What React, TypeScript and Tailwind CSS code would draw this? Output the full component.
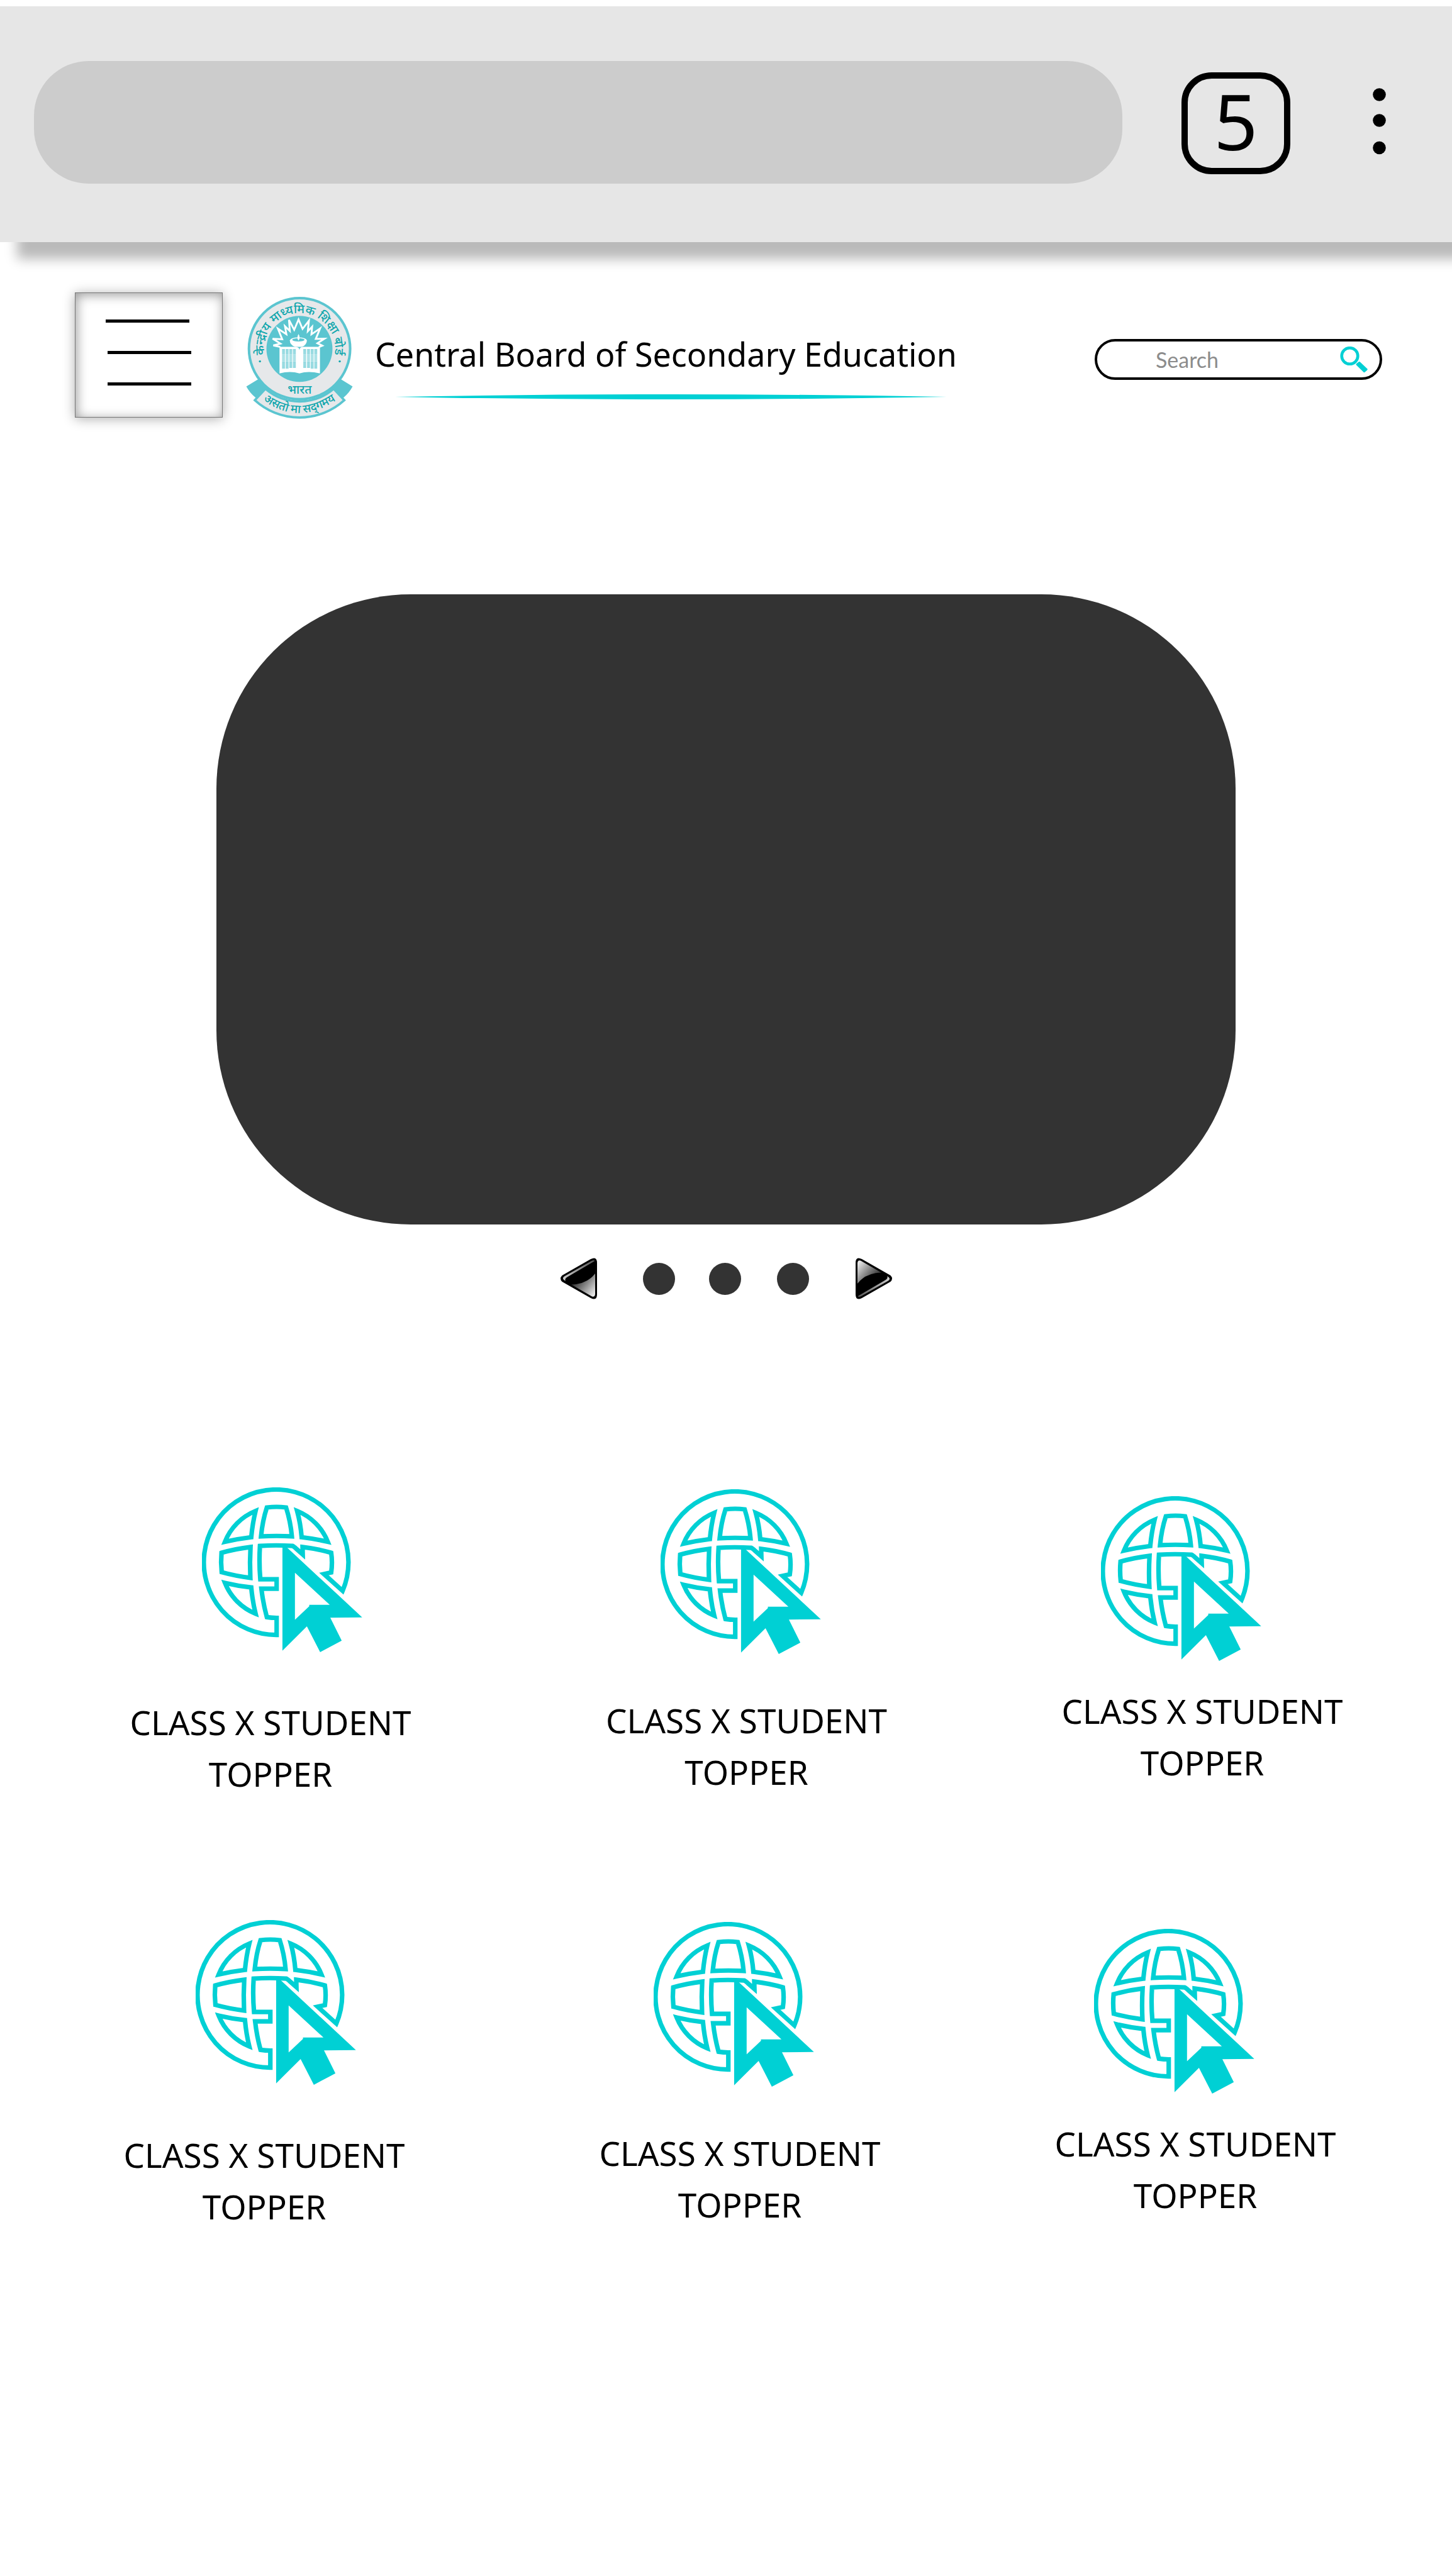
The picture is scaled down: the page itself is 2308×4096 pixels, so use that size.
import React from "react";

const TEAL = "#00d0d4";

function MenuIcon() {
  return (
    <svg width="137" height="105" viewBox="0 0 137 105" aria-hidden="true">
      <path d="M0 2.5H133M3 52.5H136M3 102.5H136" stroke="#000" strokeWidth="5" />
    </svg>
  );
}

function MoreIcon() {
  return (
    <svg width="21" height="106" viewBox="0 0 21 106" aria-hidden="true">
      <circle cx="10.5" cy="10.5" r="10.3" />
      <circle cx="10.5" cy="51.5" r="10.3" />
      <circle cx="10.5" cy="95" r="10.3" />
    </svg>
  );
}

function SearchIcon() {
  return (
    <svg width="44" height="42" viewBox="0 0 44 42" aria-hidden="true">
      <circle cx="15.5" cy="15" r="12.8" fill="none" stroke={TEAL} strokeWidth="4.6" />
      <path
        d="M27 28.5L30.8 25.5L42.2 36.3L38.5 39.7Z"
        fill={TEAL}
        stroke={TEAL}
        strokeWidth="3"
        strokeLinejoin="round"
      />
    </svg>
  );
}

function Emblem() {
  return (
    <svg
      className="mt-[7px] h-[194px] w-[170px] shrink-0"
      viewBox="97 78 588 673"
      role="img"
      aria-label="Central Board of Secondary Education emblem"
    >
      <defs>
        <path id="arc-top" d="M201 410A196 196 0 1 1 582 410" />
        <path id="arc-bottom" d="M178 640Q385 798 604 640" />
      </defs>
      <path d="M98 572L165 532L250 590L150 635Q115 605 98 572Z" fill="#5bc5d0" />
      <path d="M684 572L618 532L533 590L633 635Q667 605 684 572Z" fill="#5bc5d0" />
      <path
        d="M203 585A289 289 0 0 0 580 585L638 648A366 366 0 0 1 145 648Z"
        fill="#e6e8ea"
        stroke="#5bc5d0"
        strokeWidth="13"
      />
      <circle cx="391.5" cy="364" r="279" fill="#e6e8ea" stroke="#5bc5d0" strokeWidth="14" />
      <circle cx="391" cy="365" r="182" fill="#5bc5d0" />
      <path
        d="M285 354L247 346L286 336L243 309L296 312L272 253L319 284L311 240L338 266L333 205L362 260L386 203L408 255L443 210L437 268L461 243L457 285L505 252L481 310L529 309L490 334L517 347L498 355"
        fill="none"
        stroke="#fff"
        strokeWidth="10"
      />
      <path
        d="M338 318Q345 302 385 302Q425 302 432 318Q432 342 405 354H367Q338 343 338 318Z"
        fill="#fff"
      />
      <ellipse cx="385" cy="315" rx="34" ry="9" fill="#5bc5d0" />
      <path d="M386 283Q398 306 386 320Q373 306 386 283Z" fill="#fff" />
      <path
        d="M281 354H365Q391 354 391 372Q391 354 415 354H504V500Q440 485 391 500Q340 485 281 500Z"
        fill="#fff"
      />
      <path
        d="M303 367V474M323 367V474M343 367V472M363 367V472M420 367V472M441 367V472M461 367V474M481 367V474"
        stroke="#5bc5d0"
        strokeWidth="16"
        strokeDasharray="4 3"
      />
      <g fill="#0fa6ad" fontFamily="'Noto Sans Devanagari', 'Noto Sans', sans-serif" fontWeight="500">
        <circle cx="173" cy="434" r="6" />
        <circle cx="613" cy="434" r="6" />
        <text fontSize="67" textAnchor="middle">
          <textPath href="#arc-top" startOffset="50%">
            केन्द्रीय माध्यमिक शिक्षा बोर्ड
          </textPath>
        </text>
        <text x="392" y="612" fontSize="66" textAnchor="middle">
          भारत
        </text>
        <text fontSize="64" textAnchor="middle">
          <textPath href="#arc-bottom" startOffset="50%">
            {"असतो मा सद्\u200cगमय"}
          </textPath>
        </text>
      </g>
    </svg>
  );
}

function GlobeIcon() {
  return (
    <svg className="h-[262px] w-[255px]" viewBox="96 101 885 909" aria-hidden="true">
      <g fill="none" stroke={TEAL} strokeWidth="25">
        <path d="M508 915A399 401 0 1 1 872 672L769 579L809 570Q817 515 809 462Q735 440 651 430L652 471L618 441Q603 427 596 424Q505 418 416 424Q410 515 418 608H508V660H424Q433 740 454 817Q480 821 508 821Z" />
        <path d="M392 231A305 305 0 0 0 223 401Q295 385 368 376Q375 300 392 231Z" />
        <path d="M621 231A305 305 0 0 1 790 401Q720 385 646 376Q640 300 621 231Z" />
        <path d="M392 798A305 305 0 0 1 223 628Q295 645 368 653Q375 730 392 798Z" />
        <path d="M454 212Q508 205 560 212Q585 290 592 371Q508 367 422 371Q430 285 454 212Z" />
        <path d="M204 462Q280 440 364 430Q359 515 363 600Q280 590 205 569Q199 515 204 462Z" />
      </g>
      <path
        fill={TEAL}
        fillRule="evenodd"
        d="M540 1002V430H562L980 818L804 820L867 947L748 1010L675 868ZM609 572V831L688 757V749H801Z"
      />
    </svg>
  );
}

function ArrowIcon({ id, className }: { id: string; className?: string }) {
  return (
    <svg width="58" height="66" viewBox="0 0 58 66" className={className} aria-hidden="true">
      <defs>
        <linearGradient id={`${id}-gloss`} gradientUnits="userSpaceOnUse" x1="24" y1="36" x2="56" y2="62">
          <stop offset="0" stopColor="#333" />
          <stop offset="1" stopColor="#fff" />
        </linearGradient>
        <linearGradient id={`${id}-edge`} gradientUnits="userSpaceOnUse" x1="5" y1="34" x2="54" y2="4">
          <stop offset="0" stopColor="#ccc" />
          <stop offset="1" stopColor="#555" />
        </linearGradient>
      </defs>
      <path d="M2.5 28L48 2Q58 -3 58 8V58Q58 69 48 64L2.5 38Q-2.5 33 2.5 28Z" />
      <path d="M8 37Q1 33 6 29.5L49 5Q53 3 54.5 5L10 31Q6 34 8 37Z" fill={`url(#${id}-edge)`} />
      <path d="M55 25Q42 42 17 42.5L50 61.5Q55 63 55 57Z" fill={`url(#${id}-gloss)`} />
    </svg>
  );
}

const columns = [
  { top: "", icon: "pl-[116px]", label: "mt-[71px]" },
  { top: "pt-[3px]", icon: "pl-[88px]", label: "mt-[65px]" },
  { top: "pt-[14px]", icon: "pl-[64px]", label: "mt-[39px]" },
];

function LinkRow({ className }: { className: string }) {
  return (
    <div className={`grid grid-cols-[756fr_724fr_450px] ${className}`}>
      {columns.map((c, i) => (
        <a key={i} href="#toppers" className={`block w-[450px] ${c.top}`}>
          <span className={`block ${c.icon}`}>
            <GlobeIcon />
          </span>
          <span className={`block text-center text-[53px] leading-[82px] ${c.label}`}>
            CLASS X STUDENT
            <br />
            TOPPER
          </span>
        </a>
      ))}
    </div>
  );
}

export default function App() {
  return (
    <div className="min-h-screen overflow-x-hidden bg-white pt-[10px] font-['Noto_Sans',sans-serif] text-black">
      <header className="flex h-[375px] items-start bg-[#e6e6e6] pt-[87px] pr-[105px] pl-[54px] shadow-[27px_27px_18px_#bababa]">
        <input
          aria-label="Address"
          className="h-[195px] min-w-0 flex-1 rounded-[87px] bg-[#ccc] px-20 text-[60px] outline-none"
        />
        <button
          aria-label="Open tabs"
          className="mt-[18px] ml-[94px] flex h-[162px] w-[173px] items-center justify-center rounded-[48px] border-[10px] border-black pb-[8px] text-[122px] leading-[134px]"
        >
          5
        </button>
        <button aria-label="More options" className="mt-[43px] ml-[131px]">
          <MoreIcon />
        </button>
      </header>

      <nav className="flex items-start pt-[80px] pr-[111px] pl-[119px]">
        <button
          aria-label="Menu"
          className="flex h-[199px] w-[235px] shrink-0 items-start border border-[#777] pt-[42px] pl-[48px] shadow-[0_2px_18px_rgba(0,0,0,0.32),inset_2px_3px_18px_rgba(0,0,0,0.4)]"
        >
          <MenuIcon />
        </button>
        <a href="#home" className="ml-[37px] flex shrink-0 items-start gap-[35px]">
          <Emblem />
          <span className="mt-[62px] flex flex-col">
            <span className="text-[52px] leading-[72px] whitespace-nowrap">
              Central Board of Secondary Education
            </span>
            <svg className="mt-[28px] ml-8" width="877" height="8" viewBox="0 0 877 8" aria-hidden="true">
              <path d="M0 4Q438 -4 877 4Q438 12 0 4Z" fill={TEAL} />
            </svg>
          </span>
        </a>
        <form className="mt-[74px] ml-auto flex h-[65px] w-[457px] items-center rounded-full border-4 border-black pr-[19px] pl-[93px]">
          <input
            type="search"
            aria-label="Search"
            placeholder="Search"
            className="min-w-0 flex-1 font-['Lato',sans-serif] text-[34px] leading-[48px] outline-none placeholder:text-[#8c8c8c]"
          />
          <button type="button" aria-label="Submit search">
            <SearchIcon />
          </button>
        </form>
      </nav>

      <main>
        <section aria-label="Highlights">
          <div className="mx-[344px] mt-[279px] h-[1002px] rounded-[309px] bg-[#333]" />
          <div className="mt-[53px] flex h-[66px] items-center justify-center">
            <button aria-label="Previous slide">
              <ArrowIcon id="prev" />
            </button>
            <button aria-label="Slide 1" className="ml-[73px] size-[51px] rounded-full bg-[#333]" />
            <button aria-label="Slide 2" className="ml-[54px] size-[51px] rounded-full bg-[#333]" />
            <button aria-label="Slide 3" className="ml-[57px] size-[51px] rounded-full bg-[#333]" />
            <button aria-label="Next slide" className="ml-[74px]">
              <ArrowIcon id="next" className="rotate-180" />
            </button>
          </div>
        </section>

        <section id="toppers" aria-label="Toppers">
          <LinkRow className="mt-[299px] pr-[172px] pl-[205px]" />
          <LinkRow className="mt-[191px] pr-[183px] pl-[195px]" />
        </section>
      </main>
    </div>
  );
}
